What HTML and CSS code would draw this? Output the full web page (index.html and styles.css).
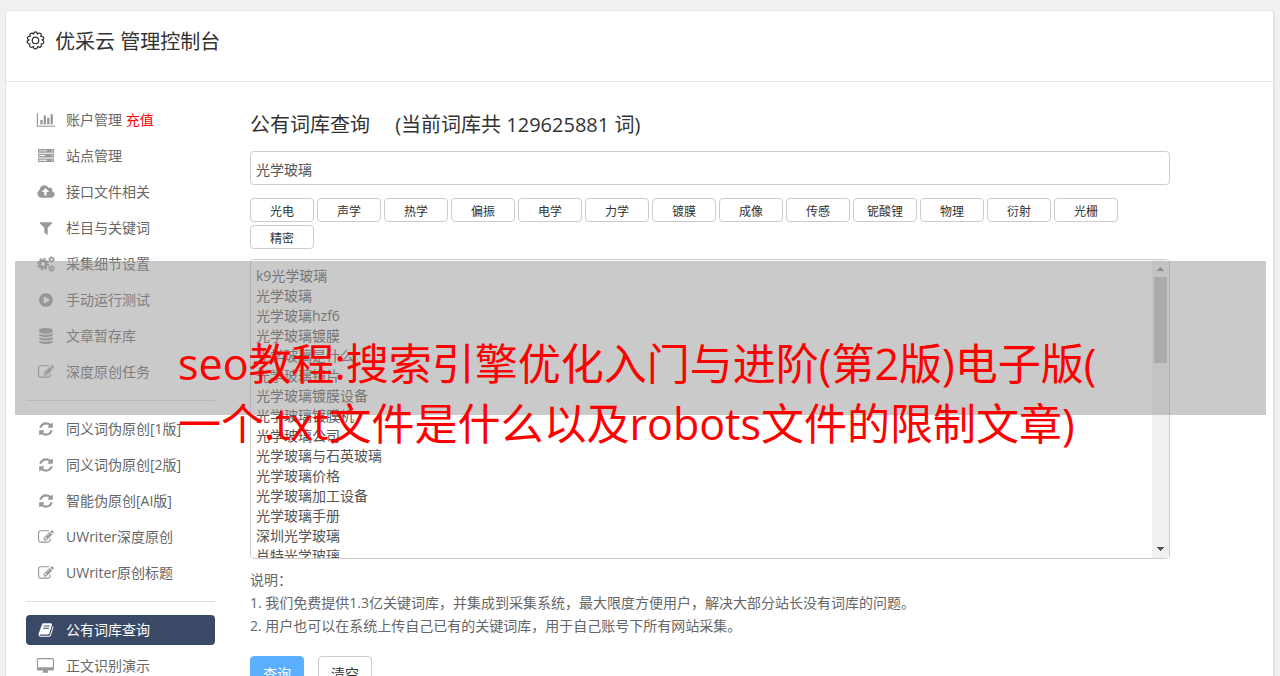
FILE: index.html
```
<!DOCTYPE html>
<html lang="zh-CN">
<head>
    <meta charset="UTF-8">
    <title>优采云 管理控制台</title>
    <link rel="stylesheet" href="styles.css">
</head>
<body>
    <!-- icon set -->
    <svg class="sprite" aria-hidden="true">
        <symbol id="i-gear" viewBox="0 0 20 20">
            <g fill="none" stroke="currentColor" stroke-width="1.300" stroke-linejoin="round">
                <path d="M8 3.300Q8.200 1 10 1T12 3.300Q13.800 1.700 15.300 2.700T15.600 5.700Q17.900 5.300 18.500 7T16.800 9.400Q19 10.200 18.700 12T16 13.500Q16.800 15.700 15.300 16.700T12.400 16.200Q12 18.600 10 18.800T7.700 16.300Q5.800 17.800 4.400 16.700T4.200 13.700Q1.800 13.800 1.300 12T3.200 9.400Q1 8.400 1.500 6.800T4.400 5.700Q3.400 3.700 4.800 2.700T8 3.300z"/>
                <circle cx="10" cy="9.900" r="3.400"/>
            </g>
        </symbol>
        <symbol id="i-chart" viewBox="0 0 2048 1792">
            <path d="M640 896v512h-256v-512h256zm384-512v1024h-256v-1024h256zm1024 1152v128h-2048v-1536h128v1408h1920zm-640-896v768h-256v-768h256zm384-384v1152h-256v-1152h256z"/>
        </symbol>
        <symbol id="i-server" viewBox="0 0 20 16">
            <path fill-rule="evenodd" d="M2 1h16v3.700H2zM2 5.700h16v3.700H2zM2 10.400h16v3.700H2zM3 2.400v.9h8v-.9zM3 7.100v.9h6v-.9zM3 11.800v.9h8v-.9zM15.500 2.200v1.200h1.200V2.200zM15.500 6.900v1.200h1.200V6.900zM15.500 11.600v1.200h1.200v-1.200z"/>
        </symbol>
        <symbol id="i-upload" viewBox="0 0 1920 1792">
            <path d="M1280 864q0-14-9-23l-352-352q-9-9-23-9t-23 9l-351 351q-10 12-10 24 0 14 9 23t23 9h224v352q0 13 9.500 22.500t22.500 9.500h192q13 0 22.500-9.500t9.500-22.500v-352h224q13 0 22.500-9.500t9.500-22.500zm640 288q0 159-112.500 271.500t-271.500 112.500h-1088q-185 0-316.500-131.500t-131.500-316.500q0-130 70-240t188-165q-2-30-2-43 0-212 150-362t362-150q156 0 285.500 87t188.500 231q71-62 166-62 106 0 181 75t75 181q0 76-41 138 130 31 213.500 135.500t83.500 238.500z"/>
        </symbol>
        <symbol id="i-filter" viewBox="0 0 1792 1792">
            <path d="M1595 295q17 41-14 70l-493 493v742q0 42-39 59-13 5-25 5-27 0-45-19l-256-256q-19-19-19-45v-486l-493-493q-31-29-14-70 17-39 59-39h1280q42 0 59 39z"/>
        </symbol>
        <symbol id="i-cogs" viewBox="0 0 18 16">
            <g fill="none" stroke="currentColor">
                <circle cx="6" cy="8" r="3.400" stroke-width="2.800"/>
                <circle cx="6" cy="8" r="5.400" stroke-width="1.600" stroke-dasharray="2.120 2.120"/>
                <circle cx="14.500" cy="3.500" r="1.800" stroke-width="1.400"/>
                <circle cx="14.500" cy="3.500" r="2.900" stroke-width="1" stroke-dasharray="1.520 1.520"/>
                <circle cx="14.500" cy="12.500" r="1.800" stroke-width="1.400"/>
                <circle cx="14.500" cy="12.500" r="2.900" stroke-width="1" stroke-dasharray="1.520 1.520"/>
            </g>
        </symbol>
        <symbol id="i-play" viewBox="0 0 1792 1792">
            <path d="M896 128q209 0 385.500 103t279.500 279.500 103 385.500-103 385.500-279.500 279.500-385.500 103-385.500-103-279.500-279.500-103-385.500 103-385.500 279.500-279.500 385.500-103zm384 823q32-18 32-55t-32-55l-544-320q-31-19-64-1-32 19-32 56v640q0 37 32 56 16 8 32 8 17 0 32-9z"/>
        </symbol>
        <symbol id="i-database" viewBox="0 0 1792 1792">
            <path d="M896 768q237 0 443-43t325-127v170q0 69-103 128t-280 93.500-385 34.500-385-34.500-280-93.500-103-128v-170q119 84 325 127t443 43zm0 768q237 0 443-43t325-127v170q0 69-103 128t-280 93.500-385 34.500-385-34.500-280-93.500-103-128v-170q119 84 325 127t443 43zm0-384q237 0 443-43t325-127v170q0 69-103 128t-280 93.500-385 34.500-385-34.500-280-93.500-103-128v-170q119 84 325 127t443 43zm0-1152q208 0 385 34.500t280 93.500 103 128v128q0 69-103 128t-280 93.500-385 34.500-385-34.500-280-93.500-103-128v-128q0-69 103-128t280-93.500 385-34.500z"/>
        </symbol>
        <symbol id="i-edit" viewBox="0 0 1792 1792">
            <path d="M888 1184l116-116-152-152-116 116v56h96v96h56zm440-720q-16-16-33 1l-350 350q-17 17-1 33t33-1l350-350q17-17 1-33zm80 594v190q0 119-84.500 203.500t-203.500 84.500h-832q-119 0-203.500-84.500t-84.500-203.500v-832q0-119 84.500-203.500t203.500-84.500h832q63 0 117 25 15 7 18 23 3 17-9 29l-49 49q-14 14-32 8-23-6-45-6h-832q-66 0-113 47t-47 113v832q0 66 47 113t113 47h832q66 0 113-47t47-113v-126q0-13 9-22l64-64q15-15 35-7t20 29zm-96-738l288 288-672 672h-288v-288zm444 132l-92 92-288-288 92-92q28-28 68-28t68 28l152 152q28 28 28 68t-28 68z"/>
        </symbol>
        <symbol id="i-refresh" viewBox="0 0 1792 1792">
            <path d="M1639 1056q0 5-1 7-64 268-268 434.500t-478 166.500q-146 0-282.500-55t-243.500-157l-129 129q-19 19-45 19t-45-19-19-45v-448q0-26 19-45t45-19h448q26 0 45 19t19 45-19 45l-137 137q71 66 161 102t187 36q134 0 250-65t186-179q11-17 53-117 8-23 30-23h192q13 0 22.500 9.500t9.500 22.500zm25-800v448q0 26-19 45t-45 19h-448q-26 0-45-19t-19-45 19-45l138-138q-148-137-349-137-134 0-250 65t-186 179q-11 17-53 117-8 23-30 23h-199q-13 0-22.500-9.500t-9.500-22.500v-7q65-268 270-434.500t480-166.500q146 0 284 55.500t245 156.500l130-129q19-19 45-19t45 19 19 45z"/>
        </symbol>
        <symbol id="i-book" viewBox="0 0 1792 1792">
            <path d="M1703 478q40 57 18 129l-275 906q-19 64-76.500 107.500t-122.500 43.500h-923q-77 0-148.500-53.500t-99.500-131.500q-24-67-2-127 0-4 3-27t4-37q1-8-3-21.500t-3-19.500q2-11 8-21t16.500-23.500 16.500-23.500q23-38 45-91.500t30-91.500q3-10 .5-30t-.5-28q3-11 17-28t17-23q21-36 42-92t25-90q1-9-2.500-32t.5-28q4-13 22-30.500t22-22.500q19-26 42.500-84.500t27.500-96.500q1-8-3-25.500t-2-26.500q2-8 9-18t18-23 17-21q8-12 16.500-30.500t15-35 16-36 19.500-32 26.500-23.500 36-11.500 47.500 5.500l-1 3q38-9 51-9h761q74 0 114 56t18 130l-274 906q-36 119-71.500 153.500t-128.500 34.500h-869q-27 0-38 15-11 16-1 43 24 70 144 70h923q29 0 56-15.500t35-41.500l300-987q7-22 5-57 38 15 59 43zm-1064 2q-4 13 2 22.500t20 9.500h608q13 0 25.500-9.500t16.500-22.500l21-64q4-13-2-22.500t-20-9.500h-608q-13 0-25.500 9.500t-16.500 22.500zm-83 256q-4 13 2 22.500t20 9.500h608q13 0 25.500-9.500t16.500-22.500l21-64q4-13-2-22.500t-20-9.500h-608q-13 0-25.500 9.500t-16.500 22.500z"/>
        </symbol>
        <symbol id="i-desktop" viewBox="0 0 1920 1792">
            <path d="M1728 992v-832q0-13-9.500-22.500t-22.500-9.500h-1600q-13 0-22.500 9.500t-9.500 22.500v832q0 13 9.500 22.500t22.500 9.500h1600q13 0 22.500-9.500t9.500-22.500zm128-832v1088q0 66-47 113t-113 47h-544q0 37 16 77.500t32 71 16 43.500q0 26-19 45t-45 19h-512q-26 0-45-19t-19-45q0-14 16-44t32-70 16-78h-544q-66 0-113-47t-47-113v-1088q0-66 47-113t113-47h1600q66 0 113 47t47 113z"/>
        </symbol>
    </svg>

    <div class="panel">
        <header class="panel-header">
            <svg class="header-icon"><use href="#i-gear"/></svg>
            <h1>优采云 管理控制台</h1>
        </header>

        <div class="panel-body">
            <nav class="sidebar">
                <a href="#"><svg class="icon"><use href="#i-chart"/></svg><span>账户管理 <em>充值</em></span></a>
                <a href="#"><svg class="icon"><use href="#i-server"/></svg>站点管理</a>
                <a href="#"><svg class="icon"><use href="#i-upload"/></svg>接口文件相关</a>
                <a href="#"><svg class="icon"><use href="#i-filter"/></svg>栏目与关键词</a>
                <a href="#"><svg class="icon"><use href="#i-cogs"/></svg>采集细节设置</a>
                <a href="#"><svg class="icon"><use href="#i-play"/></svg>手动运行测试</a>
                <a href="#"><svg class="icon"><use href="#i-database"/></svg>文章暂存库</a>
                <a href="#"><svg class="icon"><use href="#i-edit"/></svg>深度原创任务</a>
                <hr>
                <a href="#"><svg class="icon"><use href="#i-refresh"/></svg>同义词伪原创[1版]</a>
                <a href="#"><svg class="icon"><use href="#i-refresh"/></svg>同义词伪原创[2版]</a>
                <a href="#"><svg class="icon"><use href="#i-refresh"/></svg>智能伪原创[AI版]</a>
                <a href="#"><svg class="icon"><use href="#i-edit"/></svg>UWriter深度原创</a>
                <a href="#"><svg class="icon"><use href="#i-edit"/></svg>UWriter原创标题</a>
                <hr>
                <a href="#" class="active"><svg class="icon"><use href="#i-book"/></svg>公有词库查询</a>
                <a href="#"><svg class="icon"><use href="#i-desktop"/></svg>正文识别演示</a>
            </nav>

            <main class="content">
                <h2>公有词库查询 <span>(当前词库共 129625881 词)</span></h2>
                <input type="text" class="keyword" value="光学玻璃" aria-label="关键词">
                <div class="tags">
                    <button type="button">光电</button>
                    <button type="button">声学</button>
                    <button type="button">热学</button>
                    <button type="button">偏振</button>
                    <button type="button">电学</button>
                    <button type="button">力学</button>
                    <button type="button">镀膜</button>
                    <button type="button">成像</button>
                    <button type="button">传感</button>
                    <button type="button">铌酸锂</button>
                    <button type="button">物理</button>
                    <button type="button">衍射</button>
                    <button type="button">光栅</button>
                    <button type="button">精密</button>
                </div>
                <div class="result-box">
                    <textarea class="result" aria-label="查询结果">k9光学玻璃
光学玻璃
光学玻璃hzf6
光学玻璃镀膜
光学玻璃是什么
光学玻璃镜片
光学玻璃镀膜设备
光学玻璃镀膜机
光学玻璃公司
光学玻璃与石英玻璃
光学玻璃价格
光学玻璃加工设备
光学玻璃手册
深圳光学玻璃
肖特光学玻璃</textarea>
                    <div class="scrollbar" aria-hidden="true">
                        <svg viewBox="0 0 7 4"><path d="M3 0h1v1h1v1h1v1h1v1H0V3h1V2h1V1h1z"/></svg>
                        <div class="thumb"></div>
                        <svg viewBox="0 0 7 4"><path d="M0 0h7v1H6v1H5v1H4v1H3V3H2V2H1V1H0z"/></svg>
                    </div>
                </div>
                <div class="notes">
                    <p>说明：</p>
                    <p>1. 我们免费提供1.3亿关键词库，并集成到采集系统，最大限度方便用户，解决大部分站长没有词库的问题。</p>
                    <p>2. 用户也可以在系统上传自己已有的关键词库，用于自己账号下所有网站采集。</p>
                </div>
                <div class="actions">
                    <button type="button" class="primary">查询</button>
                    <button type="button">清空</button>
                </div>
            </main>
        </div>
    </div>

    <div class="banner">seo教程:搜索引擎优化入门与进阶(第2版)电子版(<br>一个.txt文件是什么以及robots文件的限制文章)</div>
</body>
</html>
```
FILE: styles.css
```
* {
    box-sizing: border-box;
}

body {
    margin: 0;
    padding: 10px 5px 0;
    height: 100vh;
    overflow: hidden;
    position: relative;
    background-color: #f1f1f1;
    color: #666;
    font-family: "Open Sans", "Noto Sans CJK SC", sans-serif;
    font-size: 14px;
    line-height: 20px;
}

button, input, textarea {
    font-family: inherit;
}

.sprite {
    display: none;
}

/* Main panel */
.panel {
    background-color: #fff;
    border: 1px solid #e4e4e4;
    border-right-width: 2px;
    border-radius: 4px;
}

.panel-header {
    display: flex;
    align-items: flex-start;
    gap: 10px;
    height: 71px;
    padding: 16px 20px 0;
    border-bottom: 1px solid #e4e4e4;
    color: #333;
}
.panel-header h1 {
    margin: 0;
    font-size: 20px;
    line-height: 30px;
    font-weight: normal;
}
.header-icon {
    width: 19px;
    height: 19px;
    margin-top: 4px;
}

.panel-body {
    display: flex;
    gap: 35px;
    padding: 23px 103px 20px 20px;
}

/* Left menu */
.sidebar {
    flex: 0 0 189px;
    display: flex;
    flex-direction: column;
    gap: 6px;
}
.sidebar a {
    display: flex;
    align-items: center;
    gap: 10px;
    height: 30px;
    padding: 0 10px;
    border-radius: 4px;
    color: #666;
    text-decoration: none;
    white-space: nowrap;
}
.sidebar em {
    color: #f00;
    font-style: normal;
}
.sidebar a.active {
    background-color: #3a4a66;
    color: #fff;
}
.sidebar hr {
    width: 100%;
    margin: 7px 0;
    border: 0;
    border-top: 1px solid #ddd;
}
.icon {
    width: 20px;
    height: 16px;
    fill: currentColor;
    color: #999;
}
.active .icon {
    color: #fff;
}

/* Query form */
.content {
    flex: 1;
    min-width: 0;
}
.content h2 {
    margin: 5px 0 11px;
    color: #333;
    font-size: 20px;
    line-height: 30px;
    font-weight: normal;
}
.content h2 span {
    margin-left: 20px;
}
.keyword {
    display: block;
    width: 100%;
    height: 34px;
    padding: 1px 5px 0;
    border: 1px solid #ccc;
    border-radius: 4px;
    color: #555;
    font-size: 14px;
}
.tags {
    display: flex;
    flex-wrap: wrap;
    gap: 3px;
    margin: 13px 0 10px;
}
.tags button {
    width: 64px;
    height: 24px;
    padding: 4px 0 0;
    border: 1px solid #ccc;
    border-radius: 4px;
    background-color: #fff;
    color: #333;
    font-size: 12px;
    line-height: 18px;
}

.result-box {
    position: relative;
    height: 300px;
    border: 1px solid #ccc;
    border-radius: 4px;
    overflow: hidden;
}
.result {
    display: block;
    width: 100%;
    height: 100%;
    padding: 6px 5px;
    border: 0;
    outline: 0;
    resize: none;
    overflow: hidden;
    color: #555;
    font-size: 14px;
    line-height: 20px;
}
.scrollbar {
    position: absolute;
    top: 0;
    right: 0;
    bottom: 0;
    width: 17px;
    display: flex;
    flex-direction: column;
    align-items: center;
    padding: 7px 0;
    background-color: #f1f1f1;
}
.scrollbar svg {
    width: 7px;
    height: 4px;
    fill: #505050;
}
.scrollbar svg:first-child {
    fill: #888;
}
.scrollbar .thumb {
    width: 13px;
    height: 86px;
    margin: 6px 0 auto;
    background-color: #c1c1c1;
}

.notes {
    margin: 9px 0 19px;
    line-height: 23px;
}
.notes p {
    margin: 0;
}

.actions {
    display: flex;
    gap: 14px;
}
.actions button {
    width: 54px;
    height: 34px;
    padding: 0;
    border: 1px solid #ccc;
    border-radius: 4px;
    background-color: #fff;
    color: #333;
    font-size: 14px;
}
.actions .primary {
    border-color: #5aafff;
    background-color: #5aafff;
    color: #fff;
}

/* Title strip laid over the page */
.banner {
    position: absolute;
    top: 261px;
    left: 15px;
    right: 14px;
    height: 154px;
    padding: 73px 0 0 163px;
    background-color: rgba(150, 150, 150, 0.5);
    color: #f00;
    font-size: 43px;
    line-height: 60px;
    white-space: nowrap;
}
```
